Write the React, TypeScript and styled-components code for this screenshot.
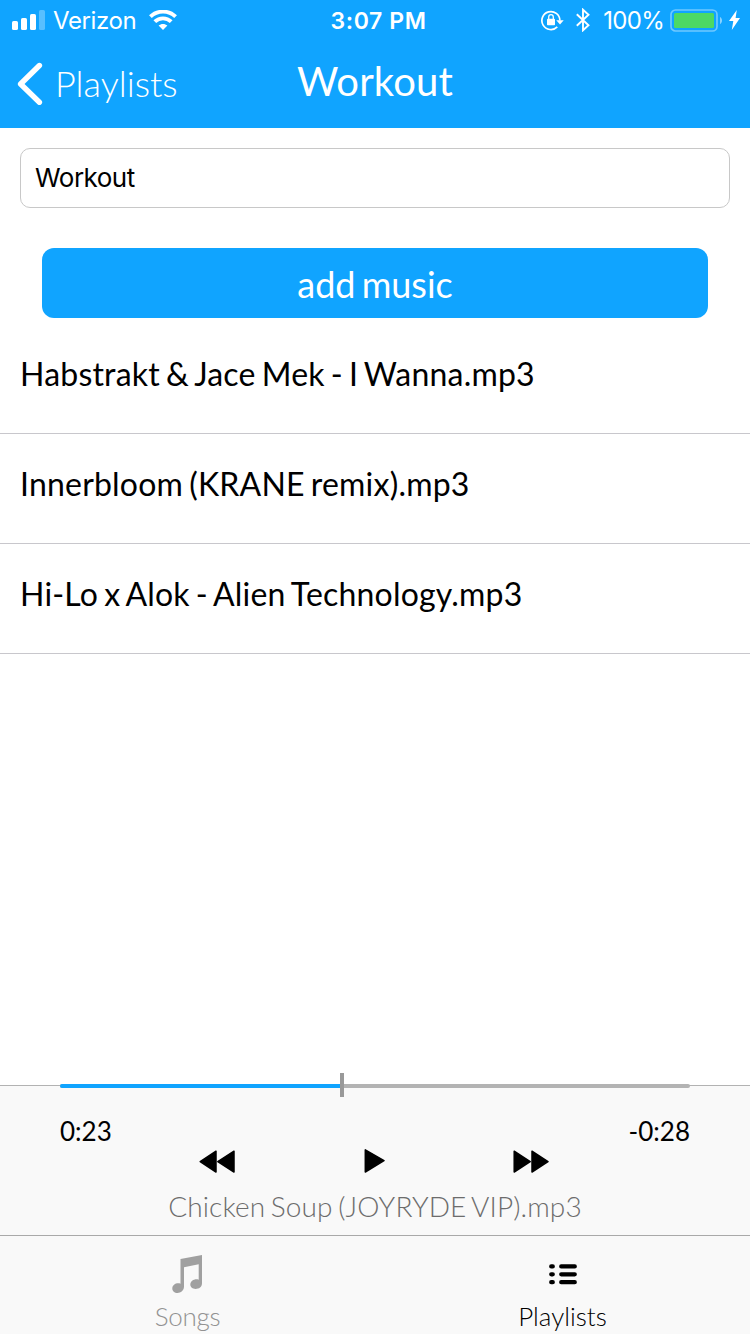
import React, { useState } from "react";
import styled, { createGlobalStyle } from "styled-components";

const GlobalStyle = createGlobalStyle`
  * { box-sizing: border-box; }
  body { margin: 0; background: #fff; font-family: Lato, "Liberation Sans", sans-serif; color: #000; }
  button, input { font: inherit; color: inherit; border: 0; padding: 0; background: none; }
  svg { display: block; flex: none; }
`;

const Screen = styled.div`
  width: 750px;
  height: 1334px;
  display: flex;
  flex-direction: column;
  overflow: hidden;
`;

const Header = styled.header`
  height: 128px;
  background: #10a4ff;
  color: #fff;
`;

const StatusBar = styled.div`
  height: 40px;
  display: grid;
  grid-template-columns: 1fr auto 1fr;
  grid-template-rows: 40px;
  align-items: center;
  padding: 0 10px 0 12px;
  font-family: Inter, "Liberation Sans", sans-serif;
  font-size: 24px;
  line-height: 36px;
`;

const StatusGroup = styled.div<{ $end?: boolean }>`
  display: flex;
  align-items: center;
  justify-content: ${(p) => (p.$end ? "flex-end" : "flex-start")};
`;

const Carrier = styled.span`
  margin: 0 13px 0 8px;
  padding-top: 2px;
  letter-spacing: -0.4px;
`;

const Clock = styled.span`
  padding: 2px 0 0 5px;
  font-weight: 600;
  font-size: 23px;
  letter-spacing: 0.6px;
`;

const Percent = styled.span`
  margin: 0 6px 0 13px;
  padding-top: 2px;
  letter-spacing: -0.7px;
`;

const NavBar = styled.nav`
  height: 88px;
  display: grid;
  grid-template-columns: 1fr auto 1fr;
  align-items: center;
  padding: 0 16px;
`;

const BackButton = styled.button`
  display: flex;
  align-items: center;
  gap: 12px;
  padding-bottom: 2px;
  font-size: 36px;
  font-weight: 300;
  line-height: 44px;
`;

const Title = styled.h1`
  margin: 0;
  padding-bottom: 6px;
  font-size: 40px;
  font-weight: 400;
  line-height: 48px;
  letter-spacing: 0.15px;
`;

const Content = styled.main`
  flex: 1;
  display: flex;
  flex-direction: column;
  padding-top: 20px;
`;

const NameInput = styled.input`
  height: 60px;
  margin: 0 20px;
  padding: 0 14px 2px;
  border: 1px solid #c8c8c8;
  border-radius: 10px;
  font-family: Inter, "Liberation Sans", sans-serif;
  font-size: 26px;
  letter-spacing: -0.5px;
  outline: 0;
`;

const AddButton = styled.button`
  height: 70px;
  margin: 40px 42px 0;
  border-radius: 12px;
  background: #10a4ff;
  color: #fff;
  font-size: 36px;
  padding-top: 1px;
  word-spacing: -3px;
`;

const SongList = styled.ul`
  margin: 6px 0 0;
  padding: 0;
  list-style: none;
`;

const SongRow = styled.li`
  height: 110px;
  padding: 31px 20px 0;
  border-bottom: 1px solid #c8c7cc;
  font-size: 32px;
  line-height: 38px;
  letter-spacing: 0.2px;
  word-spacing: -2.3px;
`;

const Player = styled.section`
  position: relative;
  height: 150px;
  padding: 29px 60px 0;
  border-top: 1px solid #b2b2b2;
  background: #f9f9f9;
`;

const Track = styled.div`
  position: absolute;
  top: -2px;
  left: 60px;
  right: 60px;
  height: 4px;
  border-radius: 2px;
  background: #b3b3b3;
`;

const Elapsed = styled.div`
  height: 4px;
  border-radius: 2px 0 0 2px;
  background: #10a4ff;
`;

const Thumb = styled.div`
  position: absolute;
  top: -11px;
  width: 4px;
  height: 24px;
  background: #999;
`;

const Times = styled.div`
  display: flex;
  justify-content: space-between;
  font-size: 26px;
  line-height: 32px;
`;

const Controls = styled.div`
  display: flex;
  align-items: center;
  justify-content: space-between;
  height: 28px;
  padding: 0 141px 0 139px;
`;

const ControlButton = styled.button`
  display: flex;
`;

const NowPlaying = styled.div`
  margin-top: 15px;
  text-align: center;
  font-size: 28px;
  font-weight: 300;
  line-height: 32px;
  word-spacing: -2px;
  letter-spacing: 0.1px;
  color: #6c6c6c;
`;

const TabBar = styled.nav`
  height: 99px;
  display: grid;
  grid-template-columns: 1fr 1fr;
  border-top: 1px solid #a9a9a9;
  background: #f9f9f9;
`;

const Tab = styled.button<{ $active?: boolean }>`
  display: flex;
  flex-direction: column;
  align-items: center;
  padding-top: 18px;
  font-size: 26px;
  font-weight: 300;
  line-height: 32px;
  letter-spacing: ${(p) => (p.$active ? "0" : "-0.3px")};
  color: ${(p) => (p.$active ? "#000" : "#929292")};
`;

const TabIcon = styled.span`
  height: 46px;
`;

const Signal = () => (
  <svg width="33" height="20" viewBox="0 0 33 20" fill="#fff">
    <rect x="0" y="11" width="6" height="9" rx="1.6" />
    <rect x="9" y="8" width="6" height="12" rx="1.6" />
    <rect x="18" y="4" width="6" height="16" rx="1.6" />
    <rect x="27" y="0" width="6" height="20" rx="1.6" opacity=".3" />
  </svg>
);

const Wifi = () => (
  <svg width="28" height="20" viewBox="0 0 28 20">
    <path d="M1.400 6.700C8.400-.1 19.600-.1 26.600 6.700" fill="none" stroke="#fff" strokeWidth="3.900" />
    <path d="M5.800 11.700c4.600-4.400 11.800-4.400 16.400 0" fill="none" stroke="#fff" strokeWidth="3.900" />
    <path d="M9.600 15.600c2.500-2.300 6.300-2.300 8.800 0L14 20Z" fill="#fff" />
  </svg>
);

const RotationLock = () => (
  <svg width="23" height="21" viewBox="0 0 23 21">
    <path d="M16.300 16.900A9 9 0 1 1 18.900 10.500" fill="none" stroke="#fff" strokeWidth="1.700" />
    <path d="M15.300 10.200h7.400L19 14.400Z" fill="#fff" />
    <rect x="6" y="8.800" width="8" height="6.400" rx=".8" fill="#fff" />
    <path d="M7.700 9V7a2.300 2.300 0 0 1 4.600 0v2" fill="none" stroke="#fff" strokeWidth="1.300" />
  </svg>
);

const Bluetooth = styled(({ className }: { className?: string }) => (
  <svg className={className} width="14" height="24" viewBox="0 0 14 24">
    <path d="M.8 6.300 12.500 17.300 7 22.300V1.700l5.500 5L.8 17.700" fill="none" stroke="#fff" strokeWidth="1.900" />
  </svg>
))`
  margin-left: 12px;
`;

const Battery = () => (
  <svg width="52" height="24" viewBox="0 0 52 24">
    <rect x="1" y="2" width="46" height="21" rx="4.500" fill="none" stroke="#fff" strokeWidth="1.700" opacity=".4" />
    <rect x="4" y="5" width="40" height="15" rx="1.500" fill="#4cd964" />
    <path d="M50 9c2.700 1.200 2.700 6 0 7.200Z" fill="#fff" opacity=".5" />
  </svg>
);

const Bolt = styled(({ className }: { className?: string }) => (
  <svg className={className} width="11" height="20" viewBox="0 0 11 20">
    <path d="M7.800 0 0 11h4.300L2.800 20l8.200-12H6.600Z" fill="#fff" />
  </svg>
))`
  margin-left: 7px;
`;

const Chevron = () => (
  <svg width="27" height="44" viewBox="0 0 27 44">
    <path d="M23.400 4.500 4.600 23l18.800 18.300" fill="none" stroke="#fff" strokeWidth="5.400" strokeLinecap="round" strokeLinejoin="round" />
  </svg>
);

const Rewind = () => (
  <svg width="36" height="24" viewBox="0 0 36 24" stroke="#000" strokeWidth="1.500" strokeLinejoin="round">
    <path d="M1.200 12.600 17 2.200v20.800ZM18.800 12.600 35 2.200v20.800Z" />
  </svg>
);

const Play = () => (
  <svg width="21" height="24" viewBox="0 0 21 24" stroke="#000" strokeWidth="1.500" strokeLinejoin="round">
    <path d="M1.300.8v22.200L20 11.600Z" />
  </svg>
);

const Forward = () => (
  <svg width="36" height="24" viewBox="0 0 36 24" stroke="#000" strokeWidth="1.500" strokeLinejoin="round">
    <path d="M35 12.600 19 2.200v20.800ZM17.200 12.600 1.200 2.200v20.800Z" />
  </svg>
);

const Note = () => (
  <svg width="32" height="40" viewBox="0 0 32 40" fill="#a0a0a0">
    <path d="M8.500 5 30 1v28.300c0 3.700-3 5.700-6.400 5.700-3 0-5.300-1.900-5.300-4.400 0-3.800 4.500-6.200 8.400-4.900V10.300L12 13.200v19.400c0 4.200-3.300 6.400-6.500 6.400-3 0-5.200-1.900-5.200-4.500 0-3.800 4.200-6 8.200-4.800Z" />
  </svg>
);

const ListIcon = () => (
  <svg width="30" height="40" viewBox="0 0 30 40">
    <g stroke="#000" strokeWidth="4.200" strokeLinecap="round">
      <path d="M3.200 12.400h1.600M13.200 12.400h13.600M3.200 20.300h1.600M13.200 20.300h13.600M3.200 28.200h1.600M13.200 28.200h13.600" />
    </g>
  </svg>
);

const songs = [
  "Habstrakt & Jace Mek - I Wanna.mp3",
  "Innerbloom (KRANE remix).mp3",
  "Hi-Lo x Alok - Alien Technology.mp3",
];

export default function App() {
  const [name, setName] = useState("Workout");
  const progress = 280;

  return (
    <Screen>
      <GlobalStyle />
      <Header>
        <StatusBar>
          <StatusGroup>
            <Signal />
            <Carrier>Verizon</Carrier>
            <Wifi />
          </StatusGroup>
          <Clock>3:07 PM</Clock>
          <StatusGroup $end>
            <RotationLock />
            <Bluetooth />
            <Percent>100%</Percent>
            <Battery />
            <Bolt />
          </StatusGroup>
        </StatusBar>
        <NavBar>
          <BackButton>
            <Chevron />
            Playlists
          </BackButton>
          <Title>Workout</Title>
        </NavBar>
      </Header>
      <Content>
        <NameInput value={name} onChange={(e) => setName(e.target.value)} />
        <AddButton>add music</AddButton>
        <SongList>
          {songs.map((song) => (
            <SongRow key={song}>{song}</SongRow>
          ))}
        </SongList>
      </Content>
      <Player>
        <Track>
          <Elapsed style={{ width: progress }} />
          <Thumb style={{ left: progress }} />
        </Track>
        <Times>
          <span>0:23</span>
          <span>-0:28</span>
        </Times>
        <Controls>
          <ControlButton aria-label="Previous"><Rewind /></ControlButton>
          <ControlButton aria-label="Play"><Play /></ControlButton>
          <ControlButton aria-label="Next"><Forward /></ControlButton>
        </Controls>
        <NowPlaying>Chicken Soup (JOYRYDE VIP).mp3</NowPlaying>
      </Player>
      <TabBar>
        <Tab>
          <TabIcon><Note /></TabIcon>
          Songs
        </Tab>
        <Tab $active>
          <TabIcon><ListIcon /></TabIcon>
          Playlists
        </Tab>
      </TabBar>
    </Screen>
  );
}
